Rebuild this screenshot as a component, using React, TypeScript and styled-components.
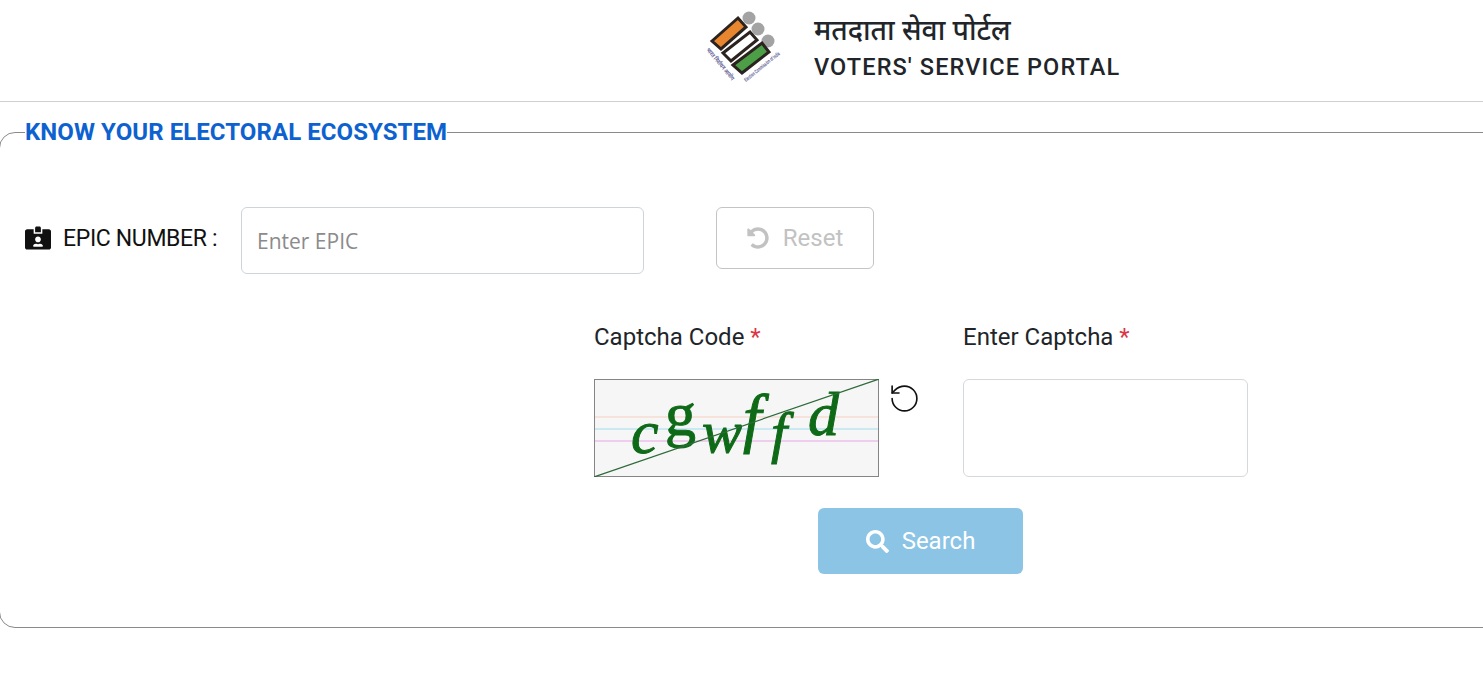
import React from 'react'
import styled, { createGlobalStyle } from 'styled-components'
import { FaIdCardAlt, FaSearch, FaUndoAlt } from 'react-icons/fa'
import { RotateCcw } from 'lucide-react'

const GlobalStyle = createGlobalStyle`
  html, body {
    margin: 0;
    padding: 0;
    background: #fff;
    overflow: hidden;
  }
  body {
    font-family: Roboto, "Noto Sans", sans-serif;
    color: #212529;
  }
`

const Page = styled.div`
  width: 1483px;
  height: 686px;
  overflow: hidden;
`

const Header = styled.header`
  display: flex;
  align-items: center;
  height: 101px;
  padding-left: 700px;
  border-bottom: 1px solid #cfcfcf;
  box-sizing: content-box;
`

const LogoSvg = styled.svg`
  flex: none;
  margin-bottom: 5px;
  overflow: visible;
`

const Brand = styled.div`
  display: flex;
  flex-direction: column;
  margin-left: 29px;
  margin-bottom: 5px;
`

const BrandHindi = styled.div`
  font-family: "Noto Sans", "Noto Sans Devanagari", "Lohit Devanagari", sans-serif;
  font-size: 28.2px;
  font-weight: 500;
  line-height: 32px;
  color: #212529;
`

const BrandEnglish = styled.div`
  font-size: 23.5px;
  font-weight: 500;
  line-height: 32px;
  letter-spacing: 1.1px;
  margin-top: 6px;
  color: #212529;
`

const Panel = styled.fieldset`
  margin: 17px -60px 0 -1px;
  padding: 0 0 0 25px;
  height: 509px;
  box-sizing: border-box;
  border: 1px solid #8a8a8a;
  border-radius: 16px;
  min-width: 0;
`

const PanelTitle = styled.legend`
  padding: 0;
  font-size: 24px;
  font-weight: 700;
  line-height: 26px;
  letter-spacing: 0.07px;
  color: #0d62d0;
`

const EpicRow = styled.div`
  display: flex;
  align-items: flex-start;
  margin-top: 62px;
`

const EpicLabel = styled.label`
  display: flex;
  align-items: center;
  gap: 12px;
  width: 216px;
  height: 62px;
  font-size: 23px;
  color: #111;
  letter-spacing: -0.35px;
`

const EpicInput = styled.input`
  width: 403px;
  height: 67px;
  box-sizing: border-box;
  padding: 0 15px;
  border: 1px solid #ced4da;
  border-radius: 6px;
  font-family: "Open Sans", sans-serif;
  font-size: 21px;
  outline: none;
  &::placeholder {
    color: #8b8b8b;
  }
`

const ResetButton = styled.button`
  display: flex;
  align-items: center;
  justify-content: center;
  gap: 14px;
  width: 158px;
  height: 62px;
  margin-left: 72px;
  background: #fff;
  border: 1px solid #c4c4c4;
  border-radius: 6px;
  font-family: Roboto, sans-serif;
  font-size: 24px;
  color: #c2c2c2;
`

const CaptchaRow = styled.div`
  display: flex;
  margin-top: 49px;
  margin-left: 569px;
`

const Field = styled.div<{ $width: number }>`
  display: flex;
  flex-direction: column;
  width: ${(p) => p.$width}px;
`

const FieldLabel = styled.div`
  font-size: 24px;
  line-height: 28px;
  color: #212529;
  margin-bottom: 28px;
`

const Required = styled.span`
  color: #dc3545;
`

const CaptchaWrap = styled.div`
  display: flex;
  align-items: flex-start;
  gap: 9px;
`

const CaptchaBox = styled.div`
  width: 285px;
  height: 98px;
  flex: none;
`

const RefreshButton = styled.button`
  display: flex;
  padding: 0;
  margin-top: 3px;
  background: none;
  border: none;
  color: #111;
`

const CaptchaInput = styled.input`
  width: 285px;
  height: 98px;
  box-sizing: border-box;
  border: 1px solid #d6d9dc;
  border-radius: 6px;
  outline: none;
`

const SearchRow = styled.div`
  display: flex;
  margin-top: 31px;
  margin-left: 793px;
`

const SearchButton = styled.button`
  display: flex;
  align-items: center;
  justify-content: center;
  gap: 13px;
  width: 205px;
  height: 66px;
  background: #8bc4e5;
  border: none;
  border-radius: 6px;
  font-family: Roboto, sans-serif;
  font-size: 24px;
  font-weight: 400;
  color: #fff;
`

const Logo = () => (
  <LogoSvg width="85" height="80" viewBox="700 8 85 80">
    <circle cx="749" cy="18" r="6.5" fill="#a3a3a3" />
    <circle cx="758" cy="29" r="6.5" fill="#a3a3a3" />
    <circle cx="768" cy="41" r="6.5" fill="#a3a3a3" />
    <polygon points="712,41 738,18 746,27 721,49" fill="#e8862f" stroke="#2b2320" strokeWidth="3" />
    <polygon points="723,53 750,32 757,40 731,61" fill="#fff" stroke="#2b2320" strokeWidth="3" />
    <polygon points="733,65 762,43 769,52 742,73" fill="#4c9f46" stroke="#2b2320" strokeWidth="3" />
    <text
      transform="translate(706 50) rotate(50)"
      fontFamily="Noto Sans, sans-serif"
      fontSize="6"
      fontWeight="600"
      fill="#55558f"
      textLength="40"
      lengthAdjust="spacingAndGlyphs"
    >
      भारत निर्वाचन आयोग
    </text>
    <text
      transform="translate(746 82) rotate(-39)"
      fontFamily="Liberation Sans, sans-serif"
      fontSize="5.5"
      fontWeight="700"
      fill="#55558f"
      textLength="44"
      lengthAdjust="spacingAndGlyphs"
    >
      Election Commission of India
    </text>
  </LogoSvg>
)

const captchaLetters = [
  { ch: 'c', x: 37, y: 74, size: 62, italic: true },
  { ch: 'g', x: 71, y: 56, size: 62, italic: false },
  { ch: 'w', x: 108, y: 73, size: 60, italic: true },
  { ch: 'f', x: 149, y: 61, size: 66, italic: true },
  { ch: 'f', x: 177, y: 73, size: 58, italic: true },
  { ch: 'd', x: 214, y: 56, size: 62, italic: true },
]

const CaptchaImage = () => (
  <svg width="285" height="98" viewBox="0 0 285 98">
    <rect x="0.5" y="0.5" width="284" height="97" fill="#f6f6f6" stroke="#858585" />
    <line x1="1" y1="38" x2="284" y2="38" stroke="#f6cfc0" />
    <line x1="1" y1="50" x2="284" y2="50" stroke="#9edcf0" />
    <line x1="1" y1="62" x2="284" y2="62" stroke="#e8a4e6" />
    {captchaLetters.map((l, i) => (
      <text
        key={i}
        x={l.x}
        y={l.y}
        fontFamily="Liberation Serif, serif"
        fontStyle={l.italic ? 'italic' : 'normal'}
        fontSize={l.size}
        fill="#0f6a18"
        stroke="#0f6a18"
        strokeWidth="1"
      >
        {l.ch}
      </text>
    ))}
    <line x1="0" y1="98" x2="285" y2="0" stroke="#2e6b3a" strokeWidth="1.2" />
  </svg>
)

const App: React.FC = () => {
  return (
    <Page>
      <GlobalStyle />
      <Header>
        <Logo />
        <Brand>
          <BrandHindi>मतदाता सेवा पोर्टल</BrandHindi>
          <BrandEnglish>VOTERS' SERVICE PORTAL</BrandEnglish>
        </Brand>
      </Header>
      <Panel>
        <PanelTitle>KNOW YOUR ELECTORAL ECOSYSTEM</PanelTitle>
        <EpicRow>
          <EpicLabel>
            <FaIdCardAlt size={26} color="#111" />
            EPIC NUMBER :
          </EpicLabel>
          <EpicInput placeholder="Enter EPIC" />
          <ResetButton type="button">
            <FaUndoAlt size={22} />
            Reset
          </ResetButton>
        </EpicRow>
        <CaptchaRow>
          <Field $width={369}>
            <FieldLabel>
              Captcha Code <Required>*</Required>
            </FieldLabel>
            <CaptchaWrap>
              <CaptchaBox>
                <CaptchaImage />
              </CaptchaBox>
              <RefreshButton type="button">
                <RotateCcw size={33} strokeWidth={1.2} />
              </RefreshButton>
            </CaptchaWrap>
          </Field>
          <Field $width={285}>
            <FieldLabel>
              Enter Captcha <Required>*</Required>
            </FieldLabel>
            <CaptchaInput />
          </Field>
        </CaptchaRow>
        <SearchRow>
          <SearchButton type="button">
            <FaSearch size={23} />
            Search
          </SearchButton>
        </SearchRow>
      </Panel>
    </Page>
  )
}

export default App
